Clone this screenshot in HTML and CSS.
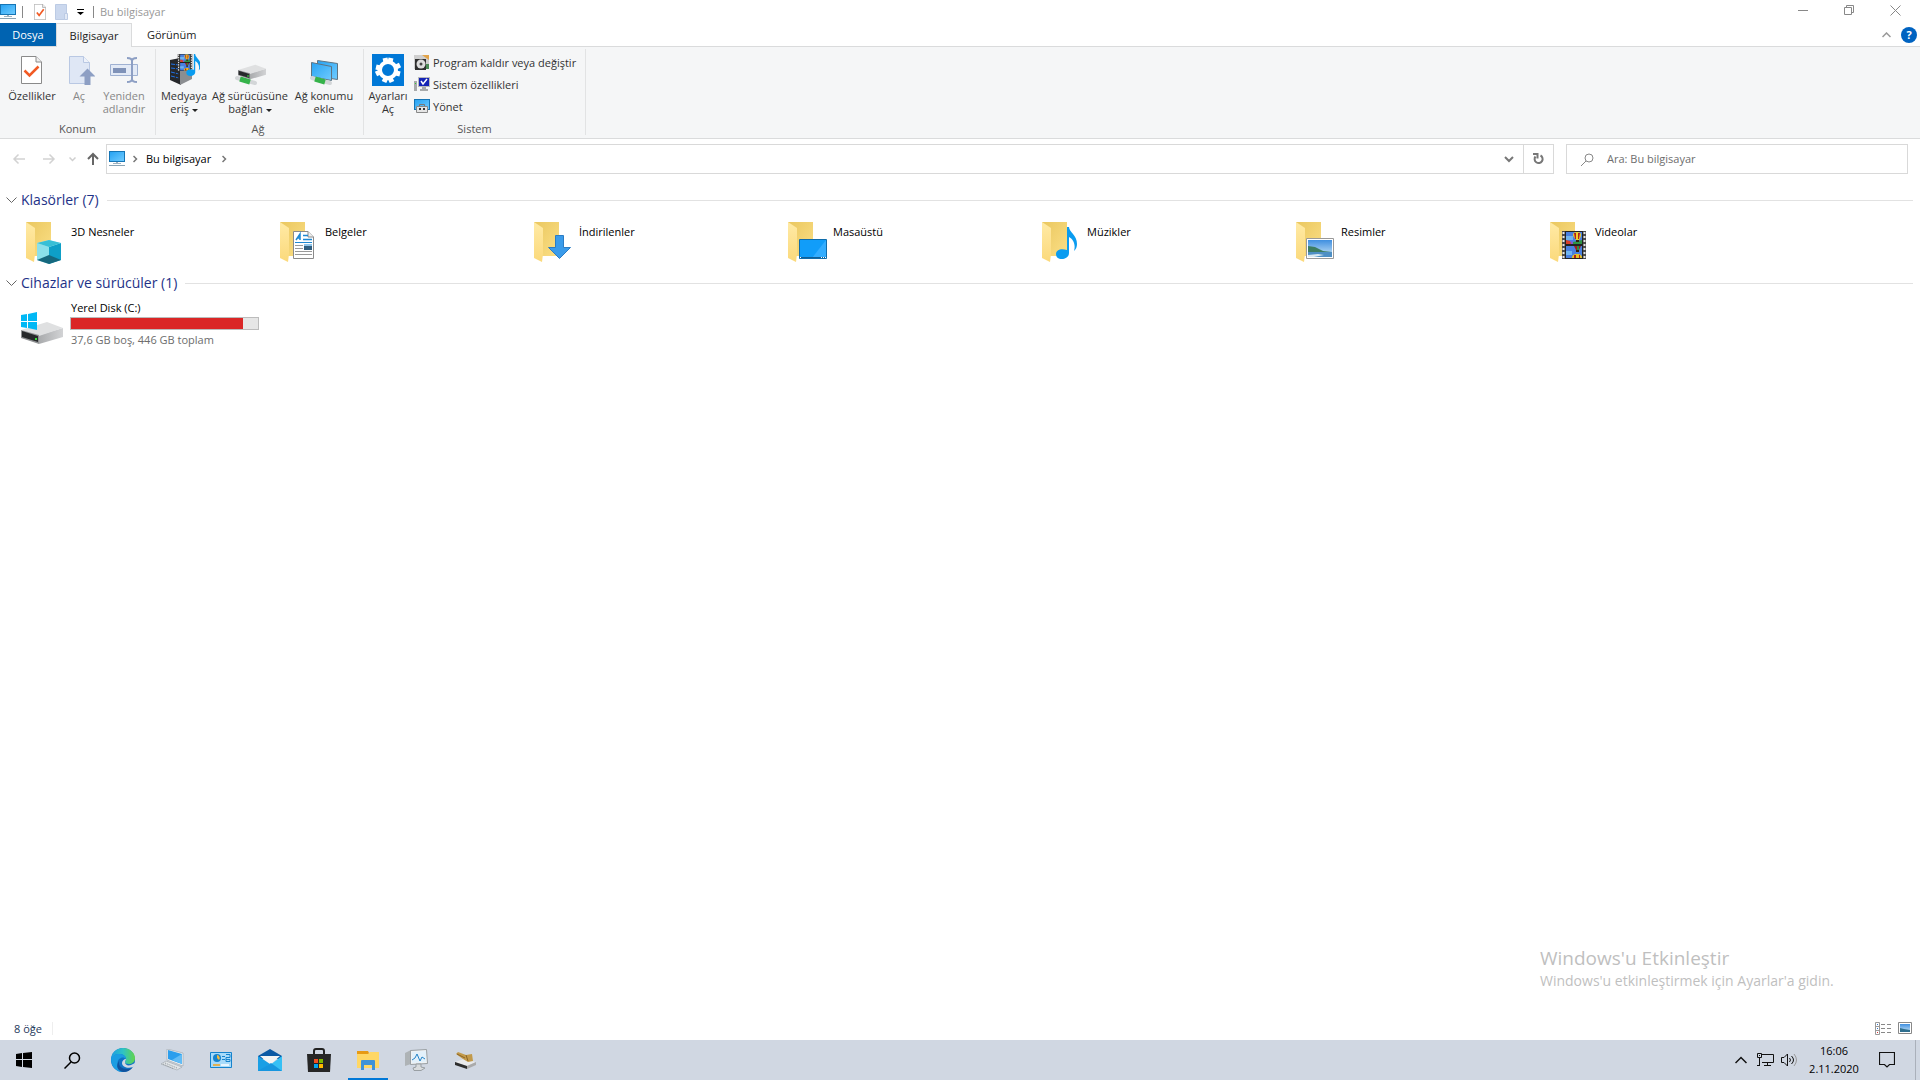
FILE: index.html
```html
<!DOCTYPE html>
<html lang="tr">
<head>
    <meta charset="utf-8">
    <title>Bu bilgisayar</title>
    <link rel="stylesheet" href="styles.css">
</head>
<body>
    <!-- shared icon parts -->
    <svg class="defs" width="0" height="0">
        <defs>
            <linearGradient id="gBack" x1="0" y1="0" x2="1" y2="1"><stop offset="0" stop-color="#eac75f"/><stop offset="1" stop-color="#fbdf86"/></linearGradient>
            <linearGradient id="gFront" x1="0" y1="0" x2="0" y2="1"><stop offset="0" stop-color="#ffeaa5"/><stop offset="1" stop-color="#fbd97b"/></linearGradient>
            <linearGradient id="gScreen" x1="0" y1="0" x2="1" y2="1"><stop offset="0" stop-color="#27a3f3"/><stop offset="1" stop-color="#6fcbff"/></linearGradient>
            <linearGradient id="gMetal" x1="0" y1="0" x2="1" y2="0"><stop offset="0" stop-color="#a9abad"/><stop offset="1" stop-color="#d2d3d5"/></linearGradient>
            <linearGradient id="gSky" x1="0" y1="0" x2="0" y2="1"><stop offset="0" stop-color="#3f8fe0"/><stop offset="1" stop-color="#cfe8f8"/></linearGradient>
            <linearGradient id="gEdge" x1="0" y1="0" x2="1" y2="0"><stop offset="0" stop-color="#1e9de3"/><stop offset=".5" stop-color="#2fc3c4"/><stop offset="1" stop-color="#62d54a"/></linearGradient>
        </defs>
        <symbol id="folder" viewBox="0 0 25 41">
            <path fill="url(#gBack)" d="M0 0h25v34H6z"/>
            <path fill="url(#gFront)" d="M0 0l9 6v26l-1 8-8-4z"/>
        </symbol>
        <symbol id="monitor" viewBox="0 0 16 16">
            <path fill="#1675b5" d="M0 0h16v11H0z"/>
            <path fill="url(#gScreen)" d="M1 1h14v9H1z"/>
            <path fill="#9fb3c1" d="M7 11h2v1h3v1H4v-1h3z"/>
            <path fill="#8ba4b5" d="M0 14h16v1H0z"/>
        </symbol>
        <symbol id="film" viewBox="0 0 24 28">
            <path fill="#4a4a4a" d="M0 0h24v28H0z"/>
            <path stroke="#e6e6e6" stroke-width="2" stroke-dasharray="2 2" d="M1.500 1v27M22.500 1v27"/>
            <path fill="#222" d="M3 0h18v28H3z"/>
            <path fill="#4a80e0" d="M4 1h16v12H4zM4 15h16v12H4z"/>
            <path fill="#6fb4ef" d="M4 5h7v4H4zM4 20h6v4H4z"/>
            <path fill="#d8402b" d="M4 9l4 1 2 3H4z"/>
            <path fill="#8a55c8" d="M8 10l3 1v2H9z"/>
            <path fill="#2f9443" d="M11 11l9-2v4h-9z"/>
            <path fill="#f0d02c" d="M11 4c0-2 1-3 4-3s4 1 4 3-1 3-2 5h-3c-1-2-3-3-3-5z"/>
            <path fill="#b02020" d="M12 2h2v6h-1zM16 2h2l-1 6h-1z"/>
            <path fill="#33220f" d="M14 9h3v2h-3z"/>
            <path fill="#a11d1d" d="M12 15h7l-2 4h-3z"/>
            <path fill="#2e8d3d" d="M15 15h2v4h-2z"/>
            <path fill="#33220f" d="M14 19h3v2h-3z"/>
            <path fill="#e8c223" d="M10 27c0-3 2-4 5-4s5 1 5 4z"/>
            <path fill="#b02020" d="M12 24h2v3h-2zM17 24h1v3h-1z"/>
        </symbol>
        <symbol id="note" viewBox="0 0 21 32">
            <path fill="#0a9cf0" d="M11 0h2c0 5 8 8 8 17 0 3-1 5-3 7 2-7-1-12-5-14v16c0 4-4 6-7 6-4 0-6-2-6-5 0-4 5-6 11-4z"/>
        </symbol>
        <symbol id="photo" viewBox="0 0 28 21">
            <path fill="#fff" stroke="#999" d="M.5.5h27v20H.5z"/>
            <path fill="url(#gSky)" d="M2 2h24v17H2z"/>
            <path fill="#3d7d61" d="M2 8l7 1 8 4 9 1v1H2z"/>
            <path fill="#4e8fc4" d="M2 14h24v5H2z"/>
            <path fill="#d9e9f2" d="M2 17l10-1 6 1-10 2H2z"/>
        </symbol>
        <symbol id="page" viewBox="0 0 21 28">
            <path fill="#fff" stroke="#8a8a8a" d="M.5.5H15L20.500 6v21.500H.5z"/>
            <path fill="#eee" stroke="#8a8a8a" d="M15 .5V6h5.500"/>
        </symbol>
        <symbol id="drive" viewBox="0 0 42 22">
            <path fill="url(#gMetal)" d="M18 13l24-7v9l-24 7z"/>
            <path fill="#dfe0e1" d="M0 8L26 0l16 6-24 8z"/>
            <path fill="#8f9193" d="M0 8l18 5v9L0 16z"/>
            <path fill="#27292b" d="M1 9l16 5v6L1 15z"/>
            <path fill="#38e23c" d="M14 16h2v2h-2z"/>
        </symbol>
    </svg>

    <header class="titlebar">
        <svg class="i16" viewBox="0 0 16 16"><use href="#monitor"/></svg>
        <span class="bar-sep"></span>
        <button class="quick" aria-label="Özellikler"><svg width="12" height="16" viewBox="0 0 21 28"><use href="#page"/><path fill="none" stroke="#f15a24" stroke-width="3" d="M5 15l4 5 8-11"/></svg></button>
        <button class="quick" aria-label="Yeni klasör"><svg width="14" height="16" viewBox="0 0 14 16"><path fill="#cbd8ee" stroke="#bccbe4" d="M.5.5h11v15H.5z"/><path fill="#e3eaf6" stroke="#bccbe4" d="M9.500 9.500h3v6h-3z"/></svg></button>
        <button class="quick narrow" aria-label="Özelleştir"><svg width="7" height="6" viewBox="0 0 7 6"><path d="M0 0h7v1H0zM0 3h7L3.500 6z"/></svg></button>
        <span class="bar-sep"></span>
        <span class="title">Bu bilgisayar</span>
        <div class="window-buttons">
            <button aria-label="Simge durumuna küçült"><svg width="10" height="10" viewBox="0 0 10 10"><path stroke="#888" d="M0 5.500h10"/></svg></button>
            <button aria-label="Geri yükle"><svg width="10" height="10" viewBox="0 0 10 10"><path fill="none" stroke="#888" d="M.5 2.500h7v7h-7zM2.500 2.500v-2h7v7h-2"/></svg></button>
            <button aria-label="Kapat"><svg width="11" height="11" viewBox="0 0 11 11"><path stroke="#888" d="M.5.5l10 10M10.500.5l-10 10"/></svg></button>
        </div>
    </header>

    <nav class="tabs">
        <button class="tab file">Dosya</button>
        <button class="tab active">Bilgisayar</button>
        <button class="tab">Görünüm</button>
        <div class="tabs-right">
            <button aria-label="Şeridi küçült"><svg width="9" height="6" viewBox="0 0 9 6"><path fill="none" stroke="#999" stroke-width="1.500" d="M.5 5l4-4 4 4"/></svg></button>
            <button class="help" aria-label="Yardım">?</button>
        </div>
    </nav>

    <section class="ribbon">
        <div class="group location">
            <div class="group-items">
                <button class="big w56"><svg width="32" height="32" viewBox="0 0 32 32"><use href="#page" x="5" y="2" width="21" height="28"/><path fill="none" stroke="#f15a24" stroke-width="2.500" d="M8.500 16.500l5 5 9-9"/></svg>Özellikler</button>
                <button class="big w38 off"><svg width="32" height="32" viewBox="0 0 32 32"><path fill="#dfe7f5" stroke="#b9c8e3" d="M6.500 2.500h14l6 6v21h-20z"/><path fill="#eef2fa" stroke="#b9c8e3" d="M20.500 2.500v6h6"/><path fill="#8d9fc4" d="M24.500 14.500l8 8h-5V31h-6v-8.500h-5z"/></svg>Aç</button>
                <button class="big w52 off"><svg width="32" height="32" viewBox="0 0 32 32"><path fill="#e3eaf6" stroke="#9fb1d2" d="M2.500 10.500h27v11h-27z"/><path fill="#7f92b8" d="M5 14h13v5H5z"/><path fill="none" stroke="#8d9fc4" stroke-width="2" d="M19 4c3 0 5 1 5 3 0-2 2-3 5-3M24 7v18M19 28c3 0 5-1 5-3 0 2 2 3 5 3"/></svg>Yeniden adlandır</button>
            </div>
            <div class="group-name">Konum</div>
        </div>
        <div class="group network">
            <div class="group-items">
                <button class="big w48"><svg width="32" height="32" viewBox="0 0 32 32"><path fill="#26282b" d="M2 6l10-2 1 27-11-5z"/><path fill="#8b8e91" d="M12 5h12v20l-12 6z"/><path stroke="#1f72e8" stroke-dasharray="4 1 2 1" d="M3 10l8 1M3 14l8 1M3 18l8 2M3 22l8 2"/><use href="#film" x="9" y="0" width="16" height="17"/><use href="#note" x="18" y="0" width="15" height="22"/></svg><span>Medyaya eriş <i class="caret"></i></span></button>
                <button class="big w84"><svg width="32" height="32" viewBox="0 0 32 32"><path stroke="#d3d6d8" stroke-width="4" stroke-linecap="round" d="M3 24l18 5"/><path stroke="#35b34a" stroke-width="5" d="M6 25l10 3"/><use href="#drive" x="4" y="10" width="28" height="16"/></svg><span>Ağ sürücüsüne bağlan <i class="caret"></i></span></button>
                <button class="big w64"><svg width="32" height="32" viewBox="0 0 32 32"><path fill="url(#gScreen)" stroke="#5f7482" d="M9.500 6.500l20 3v16l-20-3z"/><path fill="url(#gScreen)" stroke="#5f7482" d="M3.500 8.500l20 4v14l-20-4z"/><path stroke="#d3d6d8" stroke-width="4" stroke-linecap="round" d="M4 24l18 5"/><path stroke="#35b34a" stroke-width="5" d="M7 25l10 3"/></svg>Ağ konumu ekle</button>
            </div>
            <div class="group-name">Ağ</div>
        </div>
        <div class="group system">
            <div class="group-items">
                <button class="big w40"><svg width="32" height="32" viewBox="0 0 32 32"><path fill="#0078d7" d="M0 0h32v32H0z"/><circle cx="16" cy="16" r="8" fill="none" stroke="#fff" stroke-width="4"/><path stroke="#fff" stroke-width="5" d="M14 8l-1-4M18 8l1-4M8 14l-4-1M8 18l-4 2M24 13l4-2M24 19l4 1M14 24l-2 4M18 24l2 4"/></svg>Ayarları Aç</button>
                <div class="small-list">
                    <button class="small"><svg class="i16" viewBox="0 0 16 16"><path fill="#cfcfcf" d="M0 1h15v14H0z"/><path fill="#e2a44a" d="M8 1h7v5z"/><path fill="#4b8a55" d="M12 10h3v5h-3z"/><path fill="#2f2f2f" d="M1 5h11v11H1z"/><circle cx="7" cy="10" r="4.500" fill="#ddd"/><circle cx="7" cy="10" r="1.500" fill="#444"/></svg>Program kaldır veya değiştir</button>
                    <button class="small"><svg class="i16" viewBox="0 0 16 16"><path fill="#a8aaab" d="M0 5h3v10H0z"/><path fill="#3c3" d="M1 7h1v1H1z"/><path fill="#b9babc" d="M4 1h12v10H4z"/><path fill="#1524b5" d="M5 2h10v8H5z"/><path fill="none" stroke="#fff" stroke-width="1.500" d="M7 5l2 3 4-5"/><path fill="#a8aaab" d="M8 11h4v2h2v2H6v-2h2z"/></svg>Sistem özellikleri</button>
                    <button class="small"><svg class="i16" viewBox="0 0 16 16"><path fill="#1675b5" d="M0 1h16v11H0z"/><path fill="url(#gScreen)" d="M1 2h14v9H1z"/><path fill="none" stroke="#777" d="M5.500 8V6.500h5V8"/><path fill="#e5e5e5" stroke="#888" d="M2.500 8.500h11v6h-11z"/><path fill="#333" d="M5 10h2v2H5zM9 10h2v2H9z"/></svg>Yönet</button>
                </div>
            </div>
            <div class="group-name">Sistem</div>
        </div>
    </section>

    <div class="navbar">
        <div class="history">
            <button aria-label="Geri"><svg width="14" height="12" viewBox="0 0 14 12"><path fill="none" stroke="#d2d2d2" stroke-width="1.500" d="M13 6H2M6.500 1.500L2 6l4.500 4.500"/></svg></button>
            <button aria-label="İleri"><svg width="14" height="12" viewBox="0 0 14 12"><path fill="none" stroke="#d2d2d2" stroke-width="1.500" d="M1 6h11M7.500 1.500L12 6l-4.500 4.500"/></svg></button>
            <button class="recent" aria-label="Son konumlar"><svg width="7" height="5" viewBox="0 0 7 5"><path fill="none" stroke="#cfcfcf" stroke-width="1.500" d="M.5.5l3 3 3-3"/></svg></button>
            <button class="up" aria-label="Yukarı"><svg width="12" height="14" viewBox="0 0 12 14"><path fill="none" stroke="#666" stroke-width="2" d="M6 13V2M1 7l5-5 5 5"/></svg></button>
        </div>
        <div class="address">
            <svg class="i16" viewBox="0 0 16 16"><use href="#monitor"/></svg>
            <svg class="crumb" width="5" height="8" viewBox="0 0 5 8"><path fill="none" stroke="#777" stroke-width="1.500" d="M.5 1l3 3-3 3"/></svg>
            <span>Bu bilgisayar</span>
            <svg class="crumb" width="5" height="8" viewBox="0 0 5 8"><path fill="none" stroke="#777" stroke-width="1.500" d="M.5 1l3 3-3 3"/></svg>
            <button class="drop" aria-label="Önceki konumlar"><svg width="10" height="7" viewBox="0 0 10 7"><path fill="none" stroke="#777" stroke-width="2" d="M1 1l4 4 4-4"/></svg></button>
            <button class="refresh" aria-label="Yenile"><svg width="11" height="12" viewBox="0 0 11 12"><path fill="none" stroke="#777" stroke-width="2" d="M7.500 2.500a4 4 0 1 1-5 1M0 1h4.500v4.500"/></svg></button>
        </div>
        <label class="search">
            <svg width="13" height="13" viewBox="0 0 13 13"><circle cx="8" cy="5" r="4" fill="none" stroke="#888"/><path stroke="#888" d="M5 8l-5 5"/></svg>
            <input type="text" placeholder="Ara: Bu bilgisayar" aria-label="Ara">
        </label>
    </div>

    <main class="content">
        <h2 class="section"><svg width="11" height="7" viewBox="0 0 11 7"><path fill="none" stroke="#666" d="M.5.5l5 5 5-5"/></svg>Klasörler (7)</h2>
        <div class="items">
            <div class="item"><svg width="40" height="43" viewBox="0 0 40 43"><use href="#folder" width="25" height="41"/><path fill="#bdeff5" d="M11 21l12-3 12 3-12 5z"/><path fill="#8be0ea" d="M11 21l12 4v17l-12-4z"/><path fill="#0e9fc7" d="M35 21l-12 4v17l12-4z"/><path fill="#16687e" d="M11 38l12-5 12 5-12 4z"/><path fill="#37bfd6" d="M11 21l12-3 12 3-12 4z"/></svg>3D Nesneler</div>
            <div class="item"><svg width="40" height="43" viewBox="0 0 40 43"><use href="#folder" width="25" height="41"/><use href="#page" x="13" y="9" width="21" height="28"/><path fill="none" stroke="#1e88d2" stroke-width="1.500" d="M16 18l4-6v6M17 16h3M23 13.500h5M23 17.500h9"/><path stroke="#1e88d2" d="M15 20.500h17"/><path stroke="#999" d="M15 23.500h8M15 26.500h8M15 29.500h17M15 32.500h17"/><path fill="#315f80" d="M24 22h8v6h-8z"/><path fill="#8fc5ea" d="M24 22h8v2h-8z"/></svg>Belgeler</div>
            <div class="item"><svg width="40" height="43" viewBox="0 0 40 43"><use href="#folder" width="25" height="41"/><path fill="#3a9bea" stroke="#2b7cc4" d="M21.500 13.500h8v12h7L25.500 36.500 14.500 25.500h7z"/></svg>İndirilenler</div>
            <div class="item"><svg width="40" height="43" viewBox="0 0 40 43"><use href="#folder" width="25" height="41"/><path fill="#119df9" stroke="#0f6cab" d="M11.500 17.500h27v19h-27z"/><path fill="#33adff" d="M38 18v18H24z"/><path fill="#0f5f97" d="M12 35h26v1H12z"/><path stroke="#fff" stroke-dasharray="1 1" d="M33 35.500h5M12 35.500h2"/></svg>Masaüstü</div>
            <div class="item"><svg width="40" height="43" viewBox="0 0 40 43"><use href="#folder" width="25" height="41"/><use href="#note" x="14" y="5" width="21" height="32"/></svg>Müzikler</div>
            <div class="item"><svg width="40" height="43" viewBox="0 0 40 43"><use href="#folder" width="25" height="41"/><use href="#photo" x="10" y="16" width="28" height="21"/></svg>Resimler</div>
            <div class="item"><svg width="40" height="43" viewBox="0 0 40 43"><use href="#folder" width="25" height="41"/><use href="#film" x="12" y="9" width="24" height="28"/></svg>Videolar</div>
        </div>

        <h2 class="section"><svg width="11" height="7" viewBox="0 0 11 7"><path fill="none" stroke="#666" d="M.5.5l5 5 5-5"/></svg>Cihazlar ve sürücüler (1)</h2>
        <div class="disk">
            <svg width="43" height="34" viewBox="0 0 43 34"><use href="#drive" y="10" width="42" height="22"/><path fill="#00b8f5" d="M0 3l6-1v7H0zM7 2l9-2v9H7zM0 10h6v6l-6-1zM7 10h9v8l-9-2z"/></svg>
            <div class="disk-info">
                <span>Yerel Disk (C:)</span>
                <div class="usage"><div class="used" style="width: 92%"></div></div>
                <span class="free">37,6 GB boş, 446 GB toplam</span>
            </div>
        </div>

        <div class="watermark">
            <div class="watermark-title">Windows'u Etkinleştir</div>
            <div>Windows'u etkinleştirmek için Ayarlar'a gidin.</div>
        </div>
    </main>

    <footer class="status">
        <span class="count">8 öğe</span>
        <button aria-label="Ayrıntılar"><svg width="16" height="13" viewBox="0 0 16 13"><path fill="#fff" stroke="#999" d="M.5.5h4v12h-4zM.5 4.500h4M.5 8.500h4"/><path stroke="#888" stroke-dasharray="4 2" d="M6 2.500h10M6 6.500h10M6 10.500h10"/><path fill="#d33" d="M2 10h1v1H2z"/><path fill="#37c" d="M2 6h1v1H2zM2 2h1v1H2z"/></svg></button>
        <button aria-label="Büyük simgeler"><svg width="14" height="12" viewBox="0 0 14 12"><path fill="#fff" stroke="#888" d="M.5.5h13v11H.5z"/><path fill="url(#gSky)" d="M2 2h10v8H2z"/><path fill="#2f6f8f" d="M2 6l4 1 6 1v2H2z"/></svg></button>
    </footer>

    <div class="taskbar">
        <button class="task" aria-label="Başlat"><svg width="16" height="16" viewBox="0 0 16 16"><path d="M0 2l6-1v6H0zM7 1l9-1v7H7zM0 8h6v7l-6-1zM7 8h9v8l-9-1z"/></svg></button>
        <button class="task" aria-label="Ara"><svg width="17" height="17" viewBox="0 0 17 17"><circle cx="10.500" cy="6" r="5" fill="none" stroke="#000" stroke-width="1.500"/><path stroke="#000" stroke-width="1.500" d="M7 10l-6.500 6.500"/></svg></button>
        <div class="apps">
            <button class="app" aria-label="Edge"><svg width="24" height="24" viewBox="0 0 24 24"><circle cx="12" cy="12" r="12" fill="#1073c4"/><path fill="url(#gEdge)" d="M0 12C0 5 5 0 12 0s12 5 12 10c0 4-3 6-6 6s-4-1-4-2 1-1 1-3c0-3-3-5-7-5-4 0-7 3-8 6z"/><path fill="#1b9de2" d="M0 11c1-3 4-5 8-5 4 0 7 2 7 5-1-1-3-2-5-1-3 1-4 4-3 7s3 6 7 7C6 25 0 19 0 11z"/><path fill="#10529e" d="M8 13c-1 5 3 8 8 8 3 0 5-1 6-2-2 3-6 5-10 5-5-1-8-6-4-11z"/><path fill="#d0d7e2" d="M14 14c0 3 3 4 6 3l4-2c0 2-1 3-2 4-5 2-11 0-11-4 0-2 2-4 4-4 0 1-1 2-1 3z"/></svg></button>
            <button class="app" aria-label="Bilgisayar"><svg width="24" height="22" viewBox="0 0 24 22"><path fill="#eef1f3" stroke="#8f969c" stroke-width=".5" d="M7 0l16 4v13L7 11z"/><path fill="#2b9eed" d="M8 1l14 4v10L8 10z"/><path fill="#62bcf5" d="M22 5v10L12 11z"/><path fill="#e1e5e8" stroke="#8f969c" stroke-width=".5" d="M6 12l16 6-5 3L1 15z"/><path stroke="#8f969c" stroke-dasharray="1 1" d="M5 14l12 5M3 15l11 5"/></svg></button>
            <button class="app" aria-label="Denetim Masası"><svg width="22" height="16" viewBox="0 0 22 16"><path fill="#a8dbfa" stroke="#1683cd" d="M.5.5h21v15H.5z"/><circle cx="7" cy="6" r="4" fill="#1683cd"/><path fill="#f5b93c" d="M7 6V3a3 3 0 0 1 2 5z"/><path fill="none" stroke="#1683cd" d="M12 4.500h3M16 2.500h4v3h-4v4h4v-2h-4M12 7.500h3"/><path stroke="#f5a21a" stroke-width="1.500" d="M3 13h7"/><path stroke="#fff" stroke-width="1.500" d="M11 13h8"/></svg></button>
            <button class="app" aria-label="Posta"><svg width="24" height="22" viewBox="0 0 24 22"><path fill="#0c59a4" d="M0 7l12-7 12 7v3H0z"/><path fill="#f4f4f4" d="M2 7h20l-10 9z"/><path fill="#1a9fe5" d="M0 7l12 8L2 22H0z"/><path fill="#36c0f5" d="M24 7L4 22h20z"/><path fill="#1796df" d="M0 22L13 14l11 8z"/></svg></button>
            <button class="app" aria-label="Mağaza"><svg width="24" height="24" viewBox="0 0 24 24"><path fill="none" stroke="#222" stroke-width="2" d="M7 8V3q0-2 2-2h6q2 0 2 2v5"/><path fill="#262626" d="M0 6h24l-1 18H1z"/><path fill="#f25022" d="M7 11h4v4H7z"/><path fill="#7fba00" d="M12 11h4v4h-4z"/><path fill="#00a4ef" d="M7 16h4v4H7z"/><path fill="#ffb900" d="M12 16h4v4h-4z"/></svg></button>
            <button class="app open" aria-label="Dosya Gezgini"><svg width="22" height="20" viewBox="0 0 22 20"><path fill="#e79a14" d="M0 1h11l1 2v4H0z"/><path fill="#ffd765" d="M0 4h11l2-2h9v16H0z"/><path fill="#3e92d8" d="M4 11q0-1 1-1h12q1 0 1 1v9h-3v-5H7v5H4z"/></svg></button>
            <button class="app" aria-label="Performans"><svg width="24" height="22" viewBox="0 0 24 22"><path fill="#aeb3b6" d="M0 4l6-3v14l-6 2z"/><path fill="#f0f2f3" stroke="#999fa3" d="M5.500 1.500l16-1 1 14-17 1z"/><path fill="#e3f1fb" d="M7 3l14-1v11L7 14z"/><path fill="none" stroke="#2584c8" d="M7 11l3-2 2-4 3 7 2-4 3 2"/><path fill="#d9dcde" stroke="#999fa3" d="M11 15h5v3l4 1-4 2.500H9L8 19l3-1z"/></svg></button>
            <button class="app" aria-label="Disk Temizleme"><svg width="22" height="18" viewBox="0 0 22 18"><path fill="#e9eaeb" d="M0 11l9-3 12 3-9 4z"/><path fill="#2d2d2d" d="M0 11l12 4v3L0 14z"/><path fill="#aaa" d="M12 15l9-4v3l-9 4z"/><path fill="#c29a4b" d="M1 3l2-2 8 3 6-1 1 7-5 1-5-3z"/><path fill="none" stroke="#8a6428" d="M2 3l8 4M11 4l2 6"/></svg></button>
        </div>
        <div class="tray">
            <button aria-label="Gizli simgeler"><svg width="12" height="8" viewBox="0 0 12 8"><path fill="none" stroke="#111" stroke-width="1.500" d="M.5 7L6 1.500 11.500 7"/></svg></button>
            <button aria-label="Ağ"><svg width="17" height="14" viewBox="0 0 17 14"><path fill="none" stroke="#111" d="M5 1.500h11.500v8H5M10.500 10v3M7 12.500h7M.5.5h4v4h-4zM2.500 5v8M0 12.500h3M2 2.500h1"/></svg></button>
            <button aria-label="Ses"><svg width="17" height="14" viewBox="0 0 17 14"><path fill="none" stroke="#111" d="M.5 4.500H3L6.500 1v12L3 9.500H.5zM8.500 5q2 2 0 4M10.500 3q4 4 0 8"/><path fill="none" stroke="#999" d="M13 1q5 6 0 12"/></svg></button>
            <div class="clock"><span>16:06</span><span>2.11.2020</span></div>
            <button class="notify" aria-label="Bildirimler"><svg width="16" height="16" viewBox="0 0 16 16"><path fill="none" stroke="#111" stroke-width="1.200" d="M.5.5h15v12h-5L8 15l-2.500-2.500h-5z"/></svg></button>
            <span class="peek"></span>
        </div>
    </div>
</body>
</html>
```
FILE: styles.css
```css
* {
    box-sizing: border-box;
}

body {
    margin: 0;
    height: 100vh;
    display: flex;
    flex-direction: column;
    background-color: #fff;
    font-family: "Open Sans", "Noto Sans", sans-serif;
    font-size: 11px;
    line-height: 13px;
    color: #000;
}

svg {
    display: block;
    flex: none;
}

button {
    display: flex;
    align-items: center;
    justify-content: center;
    margin: 0;
    padding: 0;
    border: 0;
    background: none;
    font: inherit;
    color: inherit;
}

.defs {
    position: absolute;
}

.i16 {
    width: 16px;
    height: 16px;
}

/* title bar */
.titlebar {
    display: flex;
    align-items: center;
    height: 23px;
    color: #999;
}

.bar-sep {
    width: 1px;
    height: 12px;
    margin: 0 6px;
    background-color: #888;
}

.quick {
    width: 22px;
    height: 23px;
}

.quick.narrow {
    width: 14px;
}

.window-buttons {
    display: flex;
    align-self: flex-start;
    margin-left: auto;
    padding-right: 2px;
}

.window-buttons button {
    width: 46px;
    height: 20px;
}

/* tabs */
.tabs {
    display: flex;
    height: 24px;
    border-bottom: 1px solid #dadbdc;
    color: #222;
}

.tab {
    height: 23px;
    padding: 0 15px;
}

.tab.file {
    width: 56px;
    padding: 0;
    background-color: #0063b1;
    color: #fff;
}

.tab.active {
    width: 76px;
    height: 24px;
    padding: 0;
    border: 1px solid #dadbdc;
    border-bottom: 0;
    background-color: #f5f6f7;
}

.tabs-right {
    display: flex;
    align-items: center;
    gap: 10px;
    margin-left: auto;
    padding-right: 3px;
}

.help {
    width: 16px;
    height: 16px;
    border-radius: 50%;
    background-color: #0063c1;
    color: #fff;
    font-weight: bold;
}

/* ribbon */
.ribbon {
    display: flex;
    height: 92px;
    padding: 2px 0 3px;
    border-bottom: 1px solid #dadbdc;
    background-color: #f5f6f7;
    color: #333;
}

.group {
    display: flex;
    flex-direction: column;
    justify-content: space-between;
    padding: 5px 4px 0;
    border-right: 1px solid #e2e3e4;
}

.location {
    width: 156px;
}

.network {
    width: 208px;
    padding-right: 7px;
}

.system {
    width: 222px;
}

.group-items {
    display: flex;
}

.group-name {
    text-align: center;
    color: #555;
}

.big {
    flex-direction: column;
    justify-content: flex-start;
    gap: 3px;
    text-align: center;
}

.big.off {
    color: #888;
}

.w38 { width: 38px; }
.w40 { width: 40px; }
.w48 { width: 48px; }
.w52 { width: 52px; }
.w56 { width: 56px; }
.w64 { width: 64px; }
.w84 { width: 84px; }

.caret {
    display: inline-block;
    vertical-align: middle;
    border: 3px solid transparent;
    border-top-color: #222;
    border-bottom: 0;
}

.small-list {
    display: flex;
    flex-direction: column;
    gap: 6px;
    margin-left: 6px;
}

.small {
    justify-content: flex-start;
    gap: 3px;
    height: 16px;
    white-space: nowrap;
}

/* address row */
.navbar {
    display: flex;
    align-items: center;
    padding: 5px 12px 5px 0;
}

.history {
    display: flex;
    align-items: center;
    width: 106px;
    padding-left: 4px;
}

.history button {
    width: 30px;
    height: 24px;
}

.history .recent {
    width: 17px;
}

.history .up {
    width: 24px;
}

.address {
    display: flex;
    flex: 1;
    align-items: center;
    height: 30px;
    padding-left: 2px;
    border: 1px solid #d9d9d9;
}

.address span {
    padding: 0 3px 2px 0;
}

.crumb {
    margin: 0 8px;
}

.drop {
    width: 29px;
    margin-left: auto;
}

.refresh {
    width: 30px;
    height: 28px;
    border-left: 1px solid #d9d9d9;
}

.search {
    display: flex;
    align-items: center;
    gap: 13px;
    width: 342px;
    height: 30px;
    margin-left: 12px;
    padding-left: 14px;
    border: 1px solid #d9d9d9;
}

.search input {
    flex: 1;
    height: 20px;
    padding: 0 0 2px;
    border: 0;
    outline: 0;
    font: inherit;
    line-height: 18px;
}

.search input::placeholder {
    color: #6d6d6d;
    opacity: 1;
}

/* folders and drives */
.content {
    position: relative;
    flex: 1;
    padding: 6px 7px 0 6px;
}

.section {
    display: flex;
    align-items: center;
    gap: 4px;
    height: 30px;
    margin: 0;
    font-size: 14px;
    font-weight: normal;
    line-height: 20px;
    color: #1e3287;
}

.section::after {
    content: "";
    flex: 1;
    height: 1px;
    margin-left: 4px;
    background-color: #e2e2e2;
}

.items {
    display: grid;
    grid-template-columns: repeat(auto-fill, 254px);
    padding: 7px 0 3px 20px;
}

.item {
    display: flex;
    gap: 5px;
    line-height: 20px;
}

.disk {
    display: flex;
    gap: 6px;
    padding: 3px 0 0 15px;
}

.disk > svg {
    margin-top: 11px;
}

.disk-info {
    display: flex;
    flex-direction: column;
    gap: 3px;
    width: 189px;
}

.disk-info span {
    padding-left: 1px;
}

.usage {
    height: 13px;
    border: 1px solid #bcbcbc;
    background-color: #e6e6e6;
}

.used {
    height: 100%;
    background-color: #da2626;
}

.disk-info .free {
    color: #6d6d6d;
}

.watermark {
    position: absolute;
    right: 80px;
    bottom: 25px;
    width: 300px;
    font-size: 14px;
    line-height: 20px;
    white-space: nowrap;
    color: #bfbfbf;
}

.watermark-title {
    font-size: 19px;
    line-height: 25px;
}

/* status bar */
.status {
    display: flex;
    align-items: center;
    gap: 7px;
    height: 24px;
    padding: 0 8px 0 14px;
    color: #1e395b;
}

.count {
    margin-right: auto;
    padding-right: 10px;
    border-right: 1px solid #eee;
}

/* taskbar */
.taskbar {
    display: flex;
    height: 40px;
    background-color: #d0d7e2;
}

.task {
    width: 48px;
}

.apps {
    display: flex;
    margin-left: 2px;
}

.app {
    width: 49px;
    height: 40px;
}

.app.open {
    background: linear-gradient(#0078d7, #0078d7) center bottom / 40px 2px no-repeat;
}

.tray {
    display: flex;
    align-items: center;
    margin-left: auto;
}

.tray button {
    width: 24px;
    height: 40px;
}

.clock {
    display: flex;
    flex-direction: column;
    align-items: center;
    width: 66px;
    line-height: 18px;
}

.tray .notify {
    width: 40px;
}

.peek {
    width: 5px;
    height: 40px;
    margin-left: 8px;
    border-left: 1px solid #aab0ba;
}
```
